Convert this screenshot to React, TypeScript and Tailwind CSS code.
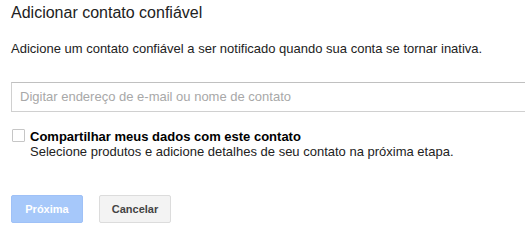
export default function App() {
  return (
    <div
      className="w-[525px] h-[238px] overflow-hidden bg-white pl-[11px] text-[#222]"
      style={{ fontFamily: '"Liberation Sans", Arial, sans-serif' }}
    >
      <div className="pt-[3px] text-[16px] leading-[20px] text-[#222]">Adicionar contato confiável</div>
      <div className="mt-[18px] text-[13px] leading-[16px] text-[#222]">
        Adicione um contato confiável a ser notificado quando sua conta se tornar inativa.
      </div>
      <div className="mt-[25px] w-[540px] h-[30px] border border-[#d0d0d0] border-t-[#c0c0c0] flex items-center pl-[8px]">
        <span className="text-[13px] text-[#a8a8a8]">Digitar endereço de e-mail ou nome de contato</span>
      </div>
      <div className="mt-[17px] flex">
        <div className="ml-[1px] mt-0 w-[13px] h-[13px] border border-[#c6c6c6] rounded-[1px] bg-white shrink-0" />
        <div className="ml-[5px] text-[13px] leading-[15px]">
          <div className="font-bold text-[#000]">Compartilhar meus dados com este contato</div>
          <div className="text-[#222]">Selecione produtos e adicione detalhes de seu contato na próxima etapa.</div>
        </div>
      </div>
      <div className="mt-[36px] flex gap-[16px]">
        <div className="w-[72px] h-[28px] rounded-[2px] bg-[#a6c8fa] border border-[#9fc1f7] flex items-center justify-center text-[11px] font-bold text-white">
          Próxima
        </div>
        <div className="w-[72px] h-[28px] rounded-[2px] bg-[#f3f3f3] border border-[#dcdcdc] flex items-center justify-center text-[11px] font-bold text-[#444]">
          Cancelar
        </div>
      </div>
    </div>
  );
}
